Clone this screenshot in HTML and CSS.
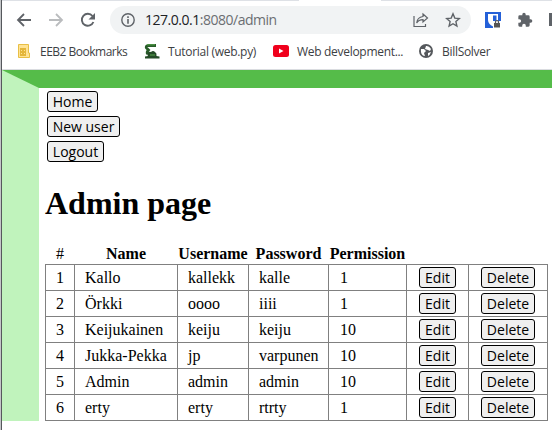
FILE: index.html
```
<!DOCTYPE html>
<html lang="en">
<head>
<meta charset="utf-8">
<title>Admin page</title>
<link rel="stylesheet" href="styles.css">
</head>
<body>
<div class="window">
  <div class="tabline"><i></i></div>
  <div class="toolbar">
    <svg class="nav" width="16" height="16" viewBox="0 0 16 16"><path d="M15 8H2M8 2 2 8l6 6" fill="none" stroke="#5f6368" stroke-width="1.8"/></svg>
    <svg class="nav" width="16" height="16" viewBox="0 0 16 16"><path d="M1 8h13M8 2l6 6-6 6" fill="none" stroke="#babcbe" stroke-width="1.8"/></svg>
    <svg class="nav" width="16" height="16" viewBox="0 0 16 16"><path d="M13.4 10A6 6 0 1 1 12.5 4" fill="none" stroke="#5f6368" stroke-width="1.9"/><path d="M15 1v6.5H8.5z" fill="#5f6368"/></svg>
    <div class="address">
      <svg width="14" height="14" viewBox="0 0 14 14"><circle cx="7" cy="7" r="6.2" fill="none" stroke="#5f6368" stroke-width="1.4"/><path d="M6.2 3.3h1.6v1.6H6.2zM6.2 6h1.6v4.7H6.2z" fill="#5f6368"/></svg>
      <span class="url">127.0.0.1<span>:8080/admin</span></span>
      <svg class="share" width="16" height="16" viewBox="0 0 16 16"><path d="M1 4v10.5h11.5V12M10 2l4.5 4L10 10V7.700C7 7.700 5 8.500 3.700 11c.3-3.500 2.500-6 6.300-6.500z" fill="none" stroke="#5f6368" stroke-width="1.2"/></svg>
      <svg width="16" height="16" viewBox="0 0 16 16"><path d="m8 1.800 1.800 4.300 4.600.4-3.500 3.100 1 4.500L8 11.700l-3.900 2.400 1-4.500-3.500-3.100 4.600-.4z" fill="none" stroke="#5f6368" stroke-width="1.4"/></svg>
    </div>
    <svg class="shield" width="16" height="16" viewBox="0 0 16 16"><path d="M0 0h16v16H0z" fill="#2460d8"/><path d="M3 2h10v6c0 3-2 5-5 6.500C5 13 3 11 3 8z" fill="#fff"/><path d="M8 3.500h3.500V8c0 2-1.500 3.500-3.500 4.700z" fill="#2460d8"/><path d="M8 9h8v7H8z" fill="#fff"/><path d="M9 11h6v4.500H9z" fill="#555"/><path d="M10.500 11V9.500q1.500-2 3 0V11" fill="none" stroke="#555" stroke-width="1.200"/></svg>
    <svg class="puzzle" width="16" height="16" viewBox="0 0 24 24"><path d="M20.500 11H19V7a2 2 0 0 0-2-2h-4V3.500a2.500 2.500 0 0 0-5 0V5H4a2 2 0 0 0-2 2v3.800h1.500a2.700 2.700 0 0 1 0 5.400H2V20a2 2 0 0 0 2 2h3.800v-1.500a2.700 2.700 0 0 1 5.400 0V22H17a2 2 0 0 0 2-2v-4h1.500a2.500 2.500 0 0 0 0-5z" fill="#5f6368"/></svg>
    <i class="edge"></i>
  </div>
  <div class="bookmarks">
    <svg width="14" height="16" viewBox="0 0 14 16"><path d="M1.500 1.500h10V10h1v4.500h-11z" fill="#ffe394" stroke="#e8bf45"/><path d="M3 5h6v8H3z" fill="#e4b63a"/><path d="M4 7h1v1H4zM7 7h1v1H7zM4 10h1v1H4zM7 10h1v1H7z" fill="#ffe394"/></svg>
    <span class="b1">EEB2 Bookmarks</span>
    <svg width="16" height="16" viewBox="0 0 16 16"><path d="M12 2.500H4Q1.500 3 2.500 5l2 2Q2.500 9 3.500 11" fill="none" stroke="#285c29" stroke-width="2.800"/><path d="M3 11q1-3 4-2 2-2 4 0 2 1 1.500 4l3 .5v2H1v-2l3-.5z" fill="#244b27"/><path d="M3 1.800h8M6 12h5" stroke="#58a84e"/></svg>
    <span class="b2">Tutorial (web.py)</span>
    <svg width="16" height="12" viewBox="0 0 16 12"><rect width="16" height="12" rx="2.500" fill="#f0001c"/><path d="m6 3.500 4.500 2.500L6 8.500z" fill="#fff"/></svg>
    <span class="b3">Web development...</span>
    <svg width="14" height="14" viewBox="0 0 14 14"><circle cx="7" cy="7" r="7" fill="#55585c"/><path d="M2 5h3l2 2-2 2 1 3C3 12 1.500 9 2 5zM7 2q3-.5 5 3l-1 2-2-1-3-1zM9 9l3-1q-1 3-3 4z" fill="#fff"/></svg>
    <span class="b4">BillSolver</span>
  </div>
  <main class="page">
    <nav class="menu"><button>Home</button><button>New user</button><button>Logout</button></nav>
    <h1>Admin page</h1>
    <table>
      <colgroup><col class="c1"><col class="c2"><col class="c3"><col class="c4"><col class="c5"><col class="c6"><col class="c7"></colgroup>
      <thead><tr><th class="num">#</th><th>Name</th><th>Username</th><th>Password</th><th>Permission</th><th></th><th></th></tr></thead>
      <tbody>
        <tr><td>1</td><td>Kallo</td><td>kallekk</td><td>kalle</td><td>1</td><td><button>Edit</button></td><td><button>Delete</button></td></tr>
        <tr><td>2</td><td>Örkki</td><td>oooo</td><td>iiii</td><td>1</td><td><button>Edit</button></td><td><button>Delete</button></td></tr>
        <tr><td>3</td><td>Keijukainen</td><td>keiju</td><td>keiju</td><td>10</td><td><button>Edit</button></td><td><button>Delete</button></td></tr>
        <tr><td>4</td><td>Jukka-Pekka</td><td>jp</td><td>varpunen</td><td>10</td><td><button>Edit</button></td><td><button>Delete</button></td></tr>
        <tr><td>5</td><td>Admin</td><td>admin</td><td>admin</td><td>10</td><td><button>Edit</button></td><td><button>Delete</button></td></tr>
        <tr><td>6</td><td>erty</td><td>erty</td><td>rtrty</td><td>1</td><td><button>Edit</button></td><td><button>Delete</button></td></tr>
      </tbody>
    </table>
  </main>
</div>
</body>
</html>
```
FILE: styles.css
```
* { box-sizing: border-box; }
body { margin: 0; background: #fff; overflow: hidden; font: 16px "Liberation Serif", serif; color: #000; }
.window { height: 430px; border-left: 1px solid #c4c6c8; box-shadow: inset 1px 0 #55585c; padding-left: 1px; }
svg { display: block; flex: none; }
.tabline { height: 1px; background: #dee1e6; display: flex; }
.tabline i { width: 82px; margin-left: 297px; background: #fff; }
.toolbar { height: 37px; display: flex; align-items: center; padding-left: 14px; }
.nav { margin-right: 16px; }
.address { width: 361px; height: 28px; border-radius: 14px; background: #f1f3f4; display: flex; align-items: center; padding: 0 10px 0 11px; margin-left: -2px; }
.url { flex: 1; margin-left: 10px; font: 14px/18px "Open Sans", sans-serif; letter-spacing: -.48px; color: #202124; white-space: nowrap; }
.url span { color: #6b6e72; }
.share { margin-right: 16px; }
.shield { margin-left: 14px; }
.puzzle { margin-left: 16px; }
.edge { width: 3px; height: 13px; background: #5f6368; margin-left: 16px; }
.bookmarks { height: 32px; border-bottom: 1px solid #dadce0; display: flex; align-items: center; padding: 0 0 5px 15px; font: 12px "Open Sans", sans-serif; letter-spacing: -.3px; color: #3c4043; white-space: nowrap; }
.b1, .b2, .b3, .b4 { flex: none; margin-left: 9px; }
.b1 { width: 104px; letter-spacing: -.5px; }
.b2 { width: 105px; margin-left: 8px; }
.b3 { width: 122px; margin-left: 8px; }
.page { height: 351px; border-top: 18px solid #55bc49; border-left: 37px solid #c0f3bc; padding: 3px 0 0 6px; }
button { display: block; height: 21px; border: 1px solid #000; border-radius: 3px; background: #efefef; color: #000; padding: 0; text-align: center; font: 14px/19px "Open Sans", sans-serif; white-space: nowrap; }
.menu { display: grid; gap: 4px; padding-left: 2px; justify-items: start; }
.menu button:nth-child(1) { width: 51px; }
.menu button:nth-child(2) { width: 73px; }
.menu button:nth-child(3) { width: 57px; }
h1 { margin: 23px 0 20px; font-size: 32px; line-height: 37px; }
table { table-layout: fixed; width: 503px; border-collapse: collapse; }
.c1 { width: 29px; } .c2 { width: 103px; } .c3 { width: 71px; } .c4 { width: 80px; } .c5 { width: 78px; } .c6 { width: 62px; } .c7 { width: 79px; }
th, td { padding: 0; white-space: nowrap; }
th { height: 22px; line-height: 20px; padding-top: 2px; }
.num { font-weight: normal; }
td { height: 26px; line-height: 23px; border: 1px solid #808080; padding: 1px 0 1px 10px; }
td:nth-child(5) { padding-left: 11px; }
td:nth-child(n+6) { padding-top: 0; padding-bottom: 0; }
td button { margin: 0 0 0 2px; }
td:nth-child(6) button { width: 37px; }
td:nth-child(7) button { width: 54px; }
```
